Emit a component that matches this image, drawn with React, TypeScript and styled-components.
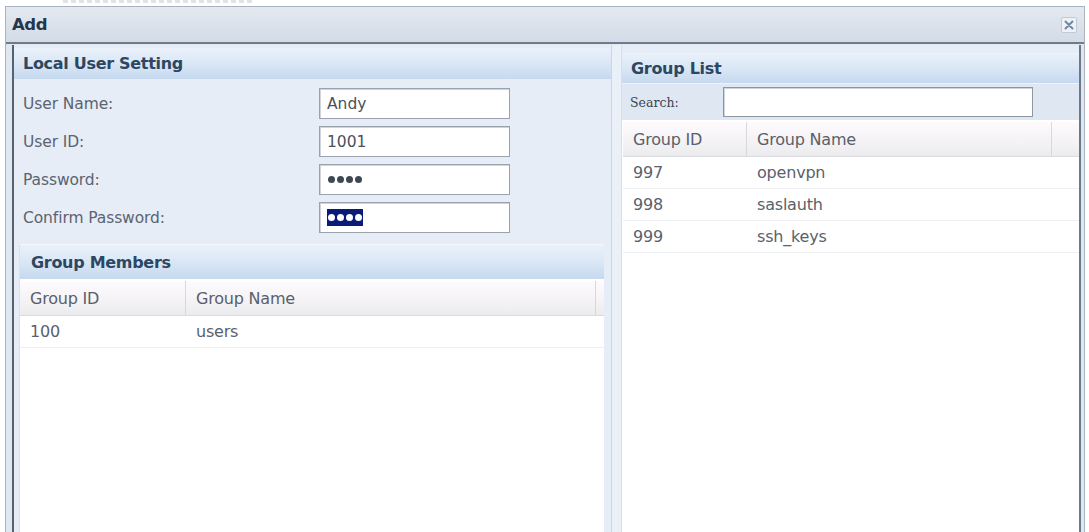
import React from "react";
import styled, { createGlobalStyle } from "styled-components";

const GlobalStyle = createGlobalStyle`
  html, body {
    margin: 0;
    padding: 0;
    background: #ffffff;
  }
  body {
    font-family: "DejaVu Sans", Tahoma, sans-serif;
  }
`;

const Page = styled.div`
  height: 532px;
  box-sizing: border-box;
  display: flex;
  flex-direction: column;
  padding: 0 4px 0 5px;
  overflow: hidden;
`;

// strip of the page behind the dialog
const Backdrop = styled.div`
  height: 6px;
  flex-shrink: 0;
  padding-left: 58px;
`;

const BackdropSmudge = styled.div`
  width: 190px;
  height: 3px;
  background: repeating-linear-gradient(90deg, #d3d7dd 0 5px, transparent 5px 8px);
  opacity: 0.7;
`;

const Dialog = styled.div`
  flex: 1;
  display: flex;
  flex-direction: column;
  min-height: 0;
  border: 1px solid #a9b3c1;
  border-bottom: none;
  background: #dfe6ef;
`;

const TitleBar = styled.div`
  height: 35px;
  display: flex;
  align-items: center;
  justify-content: space-between;
  padding: 0 7px 0 6px;
  background: linear-gradient(#e4e9f0, #d3dbe6);
  border-bottom: 2px solid #6f7b8b;
`;

const Title = styled.span`
  font-size: 16.5px;
  font-weight: bold;
  color: #24364b;
  letter-spacing: -0.4px;
`;

const CloseButton = styled.button`
  width: 16px;
  height: 16px;
  padding: 0;
  display: flex;
  align-items: center;
  justify-content: center;
  background: #eef2f7;
  border: 1px solid #c2cad6;
  border-radius: 2px;
  cursor: pointer;
`;

const Body = styled.div`
  flex: 1;
  display: flex;
  min-height: 0;
  padding: 1px 3px 0 6px;
  background: #dfe7f1;
`;

const Pane = styled.div<{ $width?: number }>`
  ${(p) => (p.$width ? `width: ${p.$width}px;` : "flex: 1;")}
  display: flex;
  flex-direction: column;
  min-height: 0;
  background: #e6edf7;
`;

const LeftPane = styled(Pane)`
  border-left: 2px solid #56626f;
  padding-top: 3px;
`;

const RightPane = styled(Pane)`
  border-right: 2px solid #6d7888;
  padding-top: 8px;
`;

const Splitter = styled.div`
  width: 9px;
  background: #e9f0f8;
  border-left: 1px solid #c9d6e6;
  border-right: 1px solid #d6e0ec;
`;

const SectionHeader = styled.div<{ $height?: number; $indent?: number }>`
  height: ${(p) => p.$height ?? 30}px;
  flex-shrink: 0;
  display: flex;
  align-items: center;
  padding-left: ${(p) => p.$indent ?? 9}px;
  font-size: 16px;
  font-weight: bold;
  color: #2d4762;
  letter-spacing: -0.3px;
  background: linear-gradient(#eaf1fa 0%, #dce8f6 45%, #c6d9ef 100%);
`;

const Form = styled.div`
  display: flex;
  flex-direction: column;
  gap: 7px;
  padding: 9px 0 11px 9px;
`;

const FieldRow = styled.div`
  display: grid;
  grid-template-columns: 296px 191px;
  align-items: center;
`;

const Label = styled.label`
  font-size: 15.5px;
  color: #5b6470;
  letter-spacing: -0.1px;
`;

const TextBox = styled.div`
  height: 31px;
  box-sizing: border-box;
  display: flex;
  align-items: center;
  padding-left: 7px;
  background: #ffffff;
  border: 1px solid #9aa2ad;
  box-shadow: inset 1px 1px 0 #d0d4da;
  font-size: 15.5px;
  color: #4a525c;
`;

const Dots = styled.span<{ $selected?: boolean }>`
  display: inline-flex;
  align-items: center;
  gap: 2px;
  height: 17px;
  padding: 0 1px;
  background: ${(p) => (p.$selected ? "#0a1b78" : "transparent")};
`;

const Dot = styled.span<{ $selected?: boolean }>`
  width: 7px;
  height: 7px;
  border-radius: 50%;
  background: ${(p) => (p.$selected ? "#ffffff" : "#3e4855")};
`;

const MembersBox = styled.div`
  flex: 1;
  display: flex;
  flex-direction: column;
  margin: 0 7px 0 5px;
  border-top: 1px solid #f3f7fb;
  border-left: 1px solid #d7e1ec;
  min-height: 0;
`;

const Grid = styled.div`
  flex: 1;
  background: #ffffff;
  min-height: 0;
  padding-top: 2px;
`;

const GridHead = styled.div<{ $cols: string }>`
  display: grid;
  grid-template-columns: ${(p) => p.$cols};
  height: 34px;
  background: linear-gradient(#fdfbfd, #f4f2f5 60%, #ebebee);
  border-bottom: 1px solid #d9dbe0;
`;

const HeadCell = styled.div`
  display: flex;
  align-items: center;
  padding-left: 10px;
  font-size: 16px;
  color: #59606a;
  letter-spacing: -0.2px;
  border-right: 1px solid #d8d8dc;
  &:last-child {
    border-right: none;
  }
`;

const GridRow = styled.div<{ $cols: string; $height?: number }>`
  display: grid;
  grid-template-columns: ${(p) => p.$cols};
  height: ${(p) => p.$height ?? 31}px;
  border-bottom: 1px solid #eef0f3;
`;

const Cell = styled.div`
  display: flex;
  align-items: center;
  padding-left: 10px;
  font-size: 16px;
  color: #5a616b;
  letter-spacing: -0.2px;
`;

const SearchBar = styled.div`
  height: 36px;
  flex-shrink: 0;
  display: flex;
  align-items: center;
  padding-left: 8px;
  background: #dfe7f2;
  border-top: 1px solid #eef3f9;
`;

const SearchLabel = styled.span`
  width: 93px;
  font-family: "DejaVu Serif", "Liberation Serif", serif;
  font-size: 12.5px;
  color: #3a4450;
`;

const SearchInput = styled.input`
  width: 310px;
  height: 30px;
  box-sizing: border-box;
  background: #ffffff;
  border: 1px solid #8e96a2;
  box-shadow: inset 1px 1px 0 #cfd4da;
  outline: none;
`;

const ListArea = styled.div`
  flex: 1;
  padding: 2px 0 0 1px;
  background: #ffffff;
`;

const CloseIcon = () => (
  <svg width="10" height="10" viewBox="0 0 10 10">
    <path d="M1.5 1.5 L8.5 8.5 M8.5 1.5 L1.5 8.5" stroke="#6f86a6" strokeWidth="2" strokeLinecap="round" />
  </svg>
);

const Password = ({ selected }: { selected?: boolean }) => (
  <Dots $selected={selected}>
    {[0, 1, 2, 3].map((i) => (
      <Dot key={i} $selected={selected} />
    ))}
  </Dots>
);

const memberCols = "166px 410px 1fr";
const listCols = "124px 305px 1fr";

const groupList = [
  { id: "997", name: "openvpn" },
  { id: "998", name: "saslauth" },
  { id: "999", name: "ssh_keys" },
];

export default function App() {
  return (
    <>
      <GlobalStyle />
      <Page>
        <Backdrop>
          <BackdropSmudge />
        </Backdrop>
        <Dialog>
          <TitleBar>
            <Title>Add</Title>
            <CloseButton aria-label="Close">
              <CloseIcon />
            </CloseButton>
          </TitleBar>
          <Body>
            <LeftPane $width={597}>
              <SectionHeader $height={31}>Local User Setting</SectionHeader>
              <Form>
                <FieldRow>
                  <Label>User Name:</Label>
                  <TextBox>Andy</TextBox>
                </FieldRow>
                <FieldRow>
                  <Label>User ID:</Label>
                  <TextBox>1001</TextBox>
                </FieldRow>
                <FieldRow>
                  <Label>Password:</Label>
                  <TextBox>
                    <Password />
                  </TextBox>
                </FieldRow>
                <FieldRow>
                  <Label>Confirm Password:</Label>
                  <TextBox>
                    <Password selected />
                  </TextBox>
                </FieldRow>
              </Form>
              <MembersBox>
                <SectionHeader $height={34} $indent={11}>Group Members</SectionHeader>
                <Grid>
                  <GridHead $cols={memberCols}>
                    <HeadCell>Group ID</HeadCell>
                    <HeadCell>Group Name</HeadCell>
                    <HeadCell />
                  </GridHead>
                  <GridRow $cols={memberCols}>
                    <Cell>100</Cell>
                    <Cell>users</Cell>
                    <Cell />
                  </GridRow>
                </Grid>
              </MembersBox>
            </LeftPane>
            <Splitter />
            <RightPane>
              <SectionHeader>Group List</SectionHeader>
              <SearchBar>
                <SearchLabel>Search:</SearchLabel>
                <SearchInput />
              </SearchBar>
              <ListArea>
                <GridHead $cols={listCols}>
                  <HeadCell>Group ID</HeadCell>
                  <HeadCell>Group Name</HeadCell>
                  <HeadCell />
                </GridHead>
                {groupList.map((g) => (
                  <GridRow key={g.id} $cols={listCols}>
                    <Cell>{g.id}</Cell>
                    <Cell>{g.name}</Cell>
                    <Cell />
                  </GridRow>
                ))}
              </ListArea>
            </RightPane>
          </Body>
        </Dialog>
      </Page>
    </>
  );
}
